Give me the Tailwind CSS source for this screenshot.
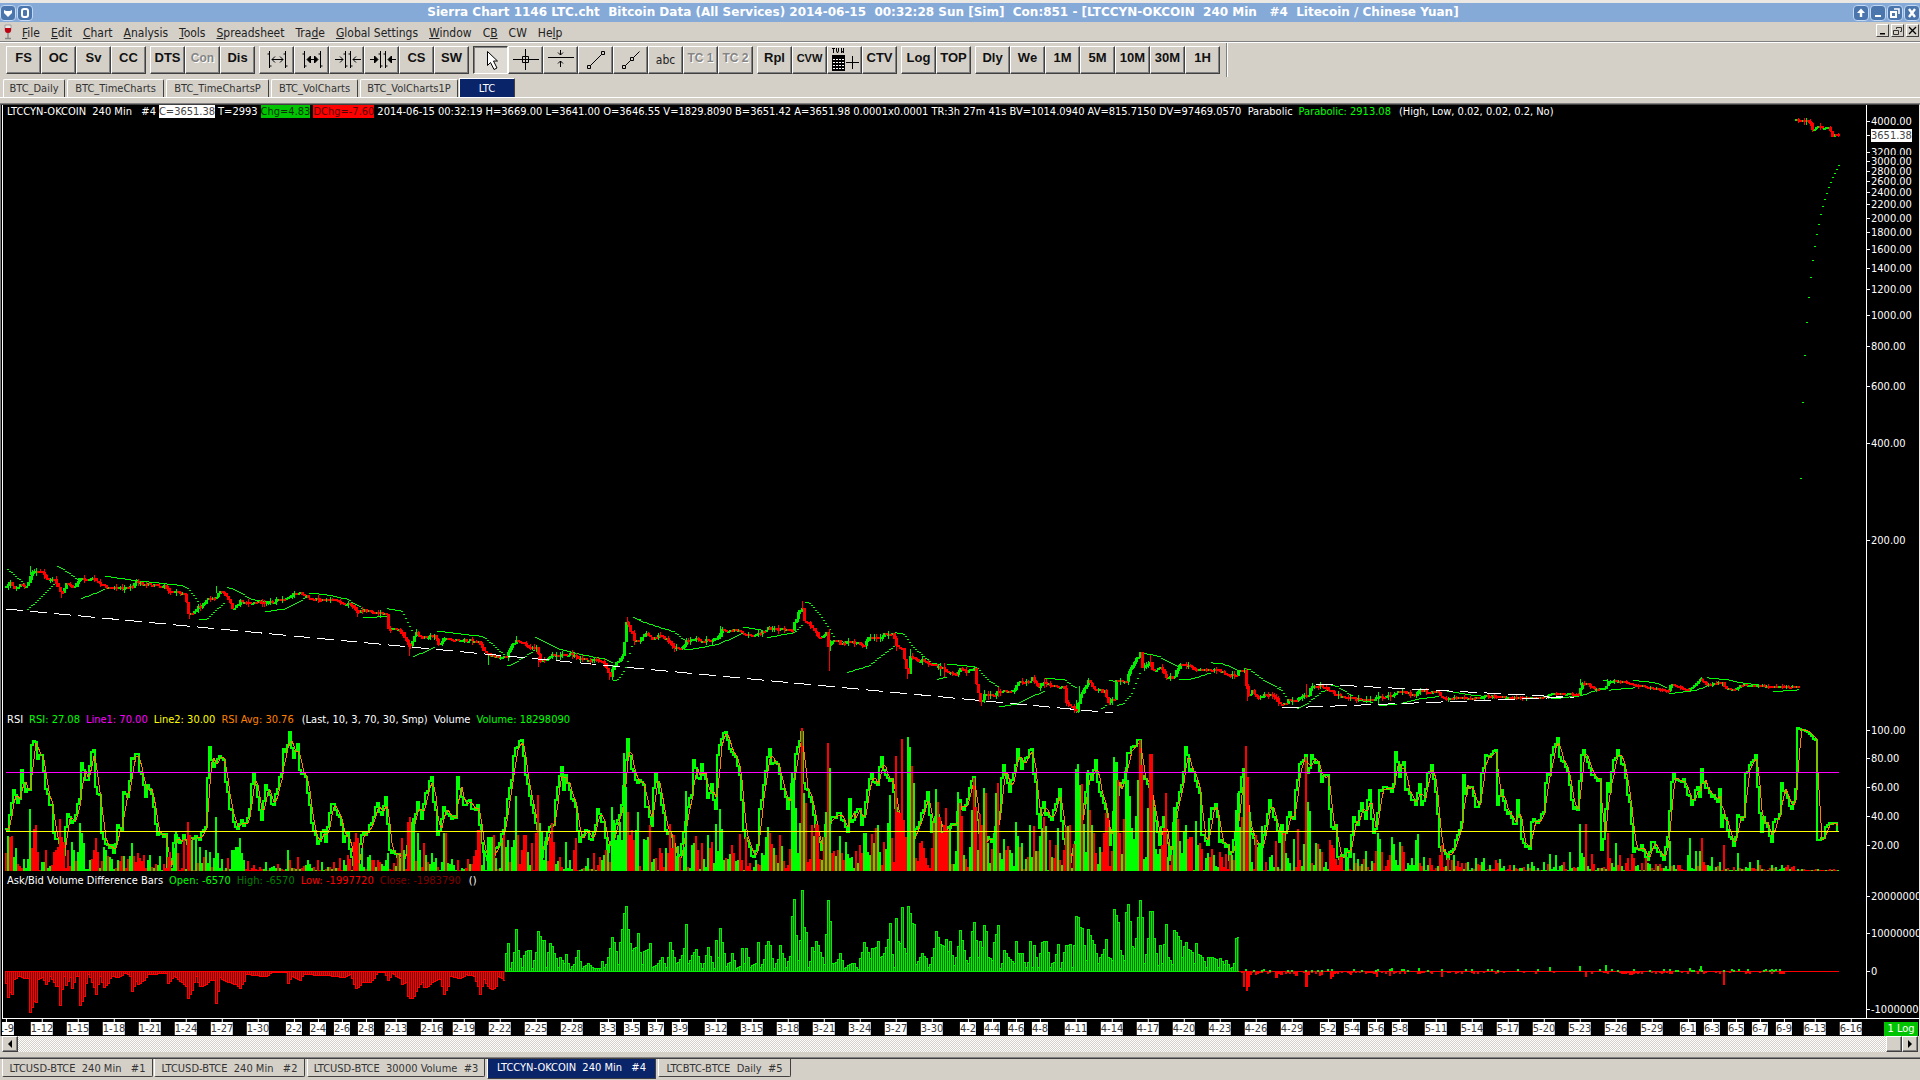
<!DOCTYPE html>
<html lang="en">
<head>
<meta charset="utf-8">
<title>Sierra Chart 1146 LTC.cht</title>
<script src="https://cdn.jsdelivr.net/npm/@tailwindcss/browser@4"></script>
</head>
<body class="flex min-h-screen flex-col overflow-hidden bg-[#d4d0c8] font-['DejaVu_Sans_Condensed','Noto_Sans',sans-serif] text-[11px] text-black">

<!-- Title bar -->
<header class="flex h-[22px] items-center border-t-3 border-[#ebe8e4] bg-[#86aad8]">
  <div class="flex shrink-0 gap-px">
    <button aria-label="Window menu" class="flex size-4 items-center justify-center rounded-sm border border-[#c3d8f2] bg-[#4b76ad]"><svg class="size-3" viewBox="0 0 12 12"><path d="M2 3l2 1h4l2-1v3L6 10 2 6z" fill="#fff"/></svg></button>
    <button aria-label="Pin" class="flex size-4 items-center justify-center rounded-sm border border-[#c3d8f2] bg-[#4b76ad]"><svg class="size-3" viewBox="0 0 12 12"><rect x="3" y="2" width="6" height="8" rx="2" fill="none" stroke="#fff" stroke-width="2"/></svg></button>
  </div>
  <h1 class="flex-1 text-center font-['DejaVu_Sans',sans-serif] text-[12px] leading-[19px] font-bold whitespace-pre text-white">Sierra Chart 1146 LTC.cht  Bitcoin Data (All Services) 2014-06-15  00:32:28 Sun [Sim]  Con:851 - [LTCCYN-OKCOIN  240 Min   #4  Litecoin / Chinese Yuan]</h1>
  <div class="flex shrink-0 gap-px">
    <button aria-label="Shade" class="flex size-4 items-center justify-center rounded-sm border border-[#c3d8f2] bg-[#4b76ad]"><svg class="size-3" viewBox="0 0 12 12"><path d="M6 1.500L10 6H7.200v4H4.800V6H2z" fill="#fff"/></svg></button>
    <button aria-label="Minimize" class="flex size-4 items-center justify-center rounded-sm border border-[#c3d8f2] bg-[#4b76ad]"><svg class="size-3" viewBox="0 0 12 12"><path d="M3 8h6v2H3z" fill="#fff"/></svg></button>
    <button aria-label="Restore" class="flex size-4 items-center justify-center rounded-sm border border-[#c3d8f2] bg-[#4b76ad]"><svg class="size-3" viewBox="0 0 12 12" fill="none" stroke="#fff" stroke-width="2"><path d="M2 5h5v5H2z"/><path d="M5 2h5v5" stroke-width="1.500"/></svg></button>
    <button aria-label="Close" class="flex size-4 items-center justify-center rounded-sm border border-[#c3d8f2] bg-[#4b76ad]"><svg class="size-3" viewBox="0 0 12 12"><path d="M3 2l6 8M9 2l-6 8" stroke="#fff" stroke-width="2.400"/></svg></button>
  </div>
</header>

<!-- Menu bar -->
<nav class="flex h-[21px] items-center border-b border-white pl-[3px] text-[12px] text-[#222] shadow-[inset_0_-1px_#808080]">
  <svg class="mr-[9px] h-4 w-2.5 shrink-0" viewBox="0 0 10 16"><path d="M2 1h6v5a3 3 0 0 1-6 0z" fill="#e8e8e8" stroke="#888" stroke-width=".7"/><path d="M2 4h6v2a3 3 0 0 1-6 0z" fill="#c00010"/><path d="M5 9v5M2 14.500h6" stroke="#888" stroke-width="1.300"/></svg>
  <div class="flex flex-1 gap-[11px] pt-px">
    <button><u>F</u>ile</button><button><u>E</u>dit</button><button><u>C</u>hart</button><button><u>A</u>nalysis</button><button><u>T</u>ools</button><button><u>S</u>preadsheet</button><button>Tra<u>d</u>e</button><button><u>G</u>lobal Settings</button><button><u>W</u>indow</button><button>C<u>B</u></button><button>CW</button><button>He<u>l</u>p</button>
  </div>
  <div class="flex gap-0.5 pr-px pb-1">
    <button aria-label="Minimize chart" class="flex size-[13px] items-center justify-center border border-t-white border-l-white border-r-[#404040] border-b-[#404040]"><svg class="size-[11px]" viewBox="0 0 11 11"><path d="M3 8h5v1.500H3z"/></svg></button>
    <button aria-label="Restore chart" class="flex size-[13px] items-center justify-center border border-t-white border-l-white border-r-[#404040] border-b-[#404040]"><svg class="size-[11px]" viewBox="0 0 11 11" fill="none" stroke="#333"><path d="M1.500 5.500h5v4h-5zM4.500 4V2.500h5v4H8"/></svg></button>
    <button aria-label="Close chart" class="flex size-[13px] items-center justify-center border border-t-white border-l-white border-r-[#404040] border-b-[#404040]"><svg class="size-[11px]" viewBox="0 0 11 11"><path d="M2 2l7 7M9 2l-7 7" stroke="#000" stroke-width="1.300"/></svg></button>
  </div>
</nav>

<!-- Toolbar, filled from the button list -->
<div class="flex h-[35px] items-start">
  <div id="toolbar" class="flex gap-1 pt-[3px] pl-1.5"></div>
  <div class="ml-1.5 h-[34px] w-0.5 border-r border-l border-l-[#808080] border-r-white"></div>
</div>

<!-- Chartbook tabs -->
<div class="flex h-[20px] items-end border-b border-white pl-[3px] leading-none text-[#333]">
  <button class="mr-0.5 h-[18px] w-[62px] rounded-t-xs border border-b-0 border-t-white border-l-white border-r-[#404040]">BTC_Daily</button>
  <button class="mr-0.5 h-[18px] w-[97px] rounded-t-xs border border-b-0 border-t-white border-l-white border-r-[#404040]">BTC_TimeCharts</button>
  <button class="mr-0.5 h-[18px] w-[103px] rounded-t-xs border border-b-0 border-t-white border-l-white border-r-[#404040]">BTC_TimeChartsP</button>
  <button class="mr-0.5 h-[18px] w-[87px] rounded-t-xs border border-b-0 border-t-white border-l-white border-r-[#404040]">BTC_VolCharts</button>
  <button class="mr-px h-[18px] w-[98px] rounded-t-xs border border-b-0 border-t-white border-l-white border-r-[#404040]">BTC_VolCharts1P</button>
  <button class="h-[19px] w-[56px] border border-b-0 border-t-white border-l-white border-r-[#404040] bg-[#0a246a] text-white">LTC</button>
</div>

<!-- Chart window -->
<main class="mt-[5px] flex grow flex-col border-t border-t-[#808080] text-[11px] leading-[13px]">
 <div class="flex grow flex-col border-x border-t border-t-[#404040] border-l-[#808080] border-r-[#ebe8e4] bg-black pl-px">
  <div class="flex grow border-b border-white">
    <div class="flex min-w-0 grow flex-col border-l border-white whitespace-pre text-white">
      <div class="flex h-[13px] pl-1">
        <span>LTCCYN-OKCOIN  240 Min   #4</span>
        <span class="mx-[3px] bg-white text-[#444]">C=3651.38</span>
        <span>T=2993</span>
        <span class="mx-[3px] bg-[#00c400] text-[#063006]">Chg=4.83</span>
        <span class="mr-[3px] bg-[#ff0000] text-[#500]">DChg=-7.60</span>
        <span>2014-06-15 00:32:19 H=3669.00 L=3641.00 O=3646.55 V=1829.8090 B=3651.42 A=3651.98 0.0001x0.0001 TR:3h 27m 41s BV=1014.0940 AV=815.7150 DV=97469.0570  Parabolic</span>
        <span class="ml-1.5 text-[#00ff00]">Parabolic: 2913.08</span>
        <span class="ml-2">(High, Low, 0.02, 0.02, 0.2, No)</span>
      </div>
      <svg id="price" class="h-[595px] w-full" viewBox="4 118 1863 595" preserveAspectRatio="none" shape-rendering="crispEdges"></svg>
      <div class="flex h-[14px] gap-1.5 pl-1">
        <span>RSI</span><span class="text-[#00ff00]">RSI: 27.08</span><span class="text-[#ff00ff]">Line1: 70.00</span><span class="text-[#ffff00]">Line2: 30.00</span><span class="text-[#ff8000]">RSI Avg: 30.76</span><span class="ml-0.5">(Last, 10, 3, 70, 30, Smp)</span><span>Volume</span><span class="text-[#00ff00]">Volume: 18298090</span>
      </div>
      <svg id="rsi" class="h-[147px] w-full" viewBox="4 727 1863 147" preserveAspectRatio="none" shape-rendering="crispEdges"></svg>
      <div class="flex h-[13px] gap-1.5 pl-1">
        <span>Ask/Bid Volume Difference Bars</span><span class="text-[#00ff00]">Open: -6570</span><span class="text-[#008000]">High: -6570</span><span class="text-[#ff0000]">Low: -1997720</span><span class="text-[#800000]">Close: -1983790</span><span class="ml-0.5">()</span>
      </div>
      <svg id="diff" class="h-[131px] w-full" viewBox="4 887 1863 131" preserveAspectRatio="none" shape-rendering="crispEdges"></svg>
    </div>
    <div id="scale" class="relative w-[53px] shrink-0 overflow-hidden border-l border-white text-white"></div>
  </div>
  <div class="relative h-[17px] overflow-hidden">
    <div id="dates"></div>
    <span class="absolute top-[3px] right-px h-[14px] w-[34px] bg-[#00c400] text-center text-white">1 Log</span>
  </div>
 </div>
 <!-- Horizontal scroll bar -->
 <div class="mr-0.5 ml-0.5 flex h-4 justify-between bg-[#eae8e4] bg-[repeating-conic-gradient(#d4d0c8_0_25%,#ffffff_0_50%)] bg-size-[2px_2px]">
   <button aria-label="Scroll left" class="flex w-4 items-center justify-center border border-t-white border-l-white border-r-[#404040] border-b-[#404040] bg-[#d4d0c8] shadow-[inset_-1px_-1px_#808080]"><svg class="h-2 w-1.5" viewBox="0 0 6 8"><path d="M5 0v8L1 4z"/></svg></button>
   <div class="flex">
     <div class="w-4 border border-t-white border-l-white border-r-[#404040] border-b-[#404040] bg-[#d4d0c8] shadow-[inset_-1px_-1px_#808080]"></div>
     <button aria-label="Scroll right" class="flex w-4 items-center justify-center border border-t-white border-l-white border-r-[#404040] border-b-[#404040] bg-[#d4d0c8] shadow-[inset_-1px_-1px_#808080]"><svg class="h-2 w-1.5" viewBox="0 0 6 8"><path d="M1 0v8l4-4z"/></svg></button>
   </div>
 </div>
</main>

<!-- Chart tabs -->
<footer class="mt-[6px] flex h-[22px] items-start border-t border-[#404040] pl-0.5 whitespace-pre text-[#333] shadow-[0_-1px_#808080]">
  <button class="mr-px h-[18px] w-[151px] rounded-b-xs border border-t-0 border-l-white border-r-[#404040] border-b-[#404040] pt-0.5">LTCUSD-BTCE  240 Min   #1</button>
  <button class="mr-0.5 h-[18px] w-[151px] rounded-b-xs border border-t-0 border-l-white border-r-[#404040] border-b-[#404040] pt-0.5">LTCUSD-BTCE  240 Min   #2</button>
  <button class="mr-0.5 h-[18px] w-[178px] rounded-b-xs border border-t-0 border-l-white border-r-[#404040] border-b-[#404040] pt-0.5">LTCUSD-BTCE  30000 Volume  #3</button>
  <button class="mr-0.5 h-[20px] w-[169px] border border-t-0 border-l-white border-r-[#404040] border-b-[#404040] bg-[#0a246a] text-white">LTCCYN-OKCOIN  240 Min   #4</button>
  <button class="h-[18px] w-[133px] rounded-b-xs border border-t-0 border-l-white border-r-[#404040] border-b-[#404040] pt-0.5">LTCBTC-BTCE  Daily  #5</button>
</footer>

<script>
// ---- Toolbar ----
const bar = (x) => `M${x} 4v17M${x - 2} 7h2M${x} 19h2`;
const icons = {
  wide: `<path d="${bar(9.5)}${bar(25.5)}M12 12.500h11M15 9.500l-3 3 3 3M20 9.500l3 3-3 3"/>`,
  wideBold: `<path d="${bar(9.5)}${bar(25.5)}M13 12.500h9"/><path fill="#000" d="M15.500 9v7l-3.500-3.500zM19.500 9v7l3.500-3.500z"/>`,
  narrow: `<path d="${bar(15.5)}${bar(20.5)}M5 12.500h8M10 9.500l3 3-3 3M31 12.500h-8M26 9.500l-3 3 3 3"/>`,
  narrowBold: `<path d="${bar(15.5)}${bar(20.5)}M5 12.500h4M31 12.500h-4"/><path fill="#000" d="M9.500 9v7l3.500-3.500zM26.500 9v7l-3.500-3.500z"/>`,
  arrow: `<path fill="#fff" d="M13.500 4.500v14l3-3 3.500 7 3-1.500-3.500-7h4z"/>`,
  cross: `<path d="M4 12.500h26M16.500 2v21M13.500 9.500h6v6h-6z"/>`,
  level: `<path d="M4 10.500h26M16.500 3v5M14 5.500l2.500 2.500 2.500-2.500M16.500 20v-6M14 16.500l2.500-2.500 2.500 2.500"/>`,
  line: `<path d="M8.500 18.500h3v3h-3zM22.500 4.500h3v3h-3zM11.500 18.500l11-11"/>`,
  ray: `<path d="M8.500 18.500h3v3h-3zM16.500 10.500h3v3h-3zM11.500 18.500l5-5M19.500 10.500l6-6"/>`,
  calc: `<path d="M4 8h13v16H4z" fill="#000" stroke="none"/><path stroke="#fff" d="M5 12.500h11M5 15.500h11M5 18.500h11M5 21.500h11"/><path stroke="#000" d="M7.500 11v12M10.500 11v12M13.500 11v12M18 15.500h13M24.500 9v13M4 1.500h3M5.500 1v5M8.500 1v3l1 2 1-2V1M13.500 1v5l1-2 1 2V1"/>`
};
const groups = [
  ['FS', 'OC', 'Sv', 'CC'], ['DTS', '-Con', 'Dis'],
  ['*wide', '*wideBold', '*narrow', '*narrowBold', 'CS', 'SW'],
  ['*arrow', '*cross', '*level', '*line', '*ray', 'abc', '-TC 1', '-TC 2'],
  ['Rpl', 'CVW', '*calc', 'CTV'], ['Log', 'TOP'], ['Dly', 'We', '1M', '5M', '10M', '30M', '1H']
];
const raised = 'flex h-[28px] w-[35px] items-center justify-center border border-t-white border-l-white border-r-[#404040] border-b-[#404040] shadow-[inset_-1px_-1px_#808080]';
const sunken = 'flex h-[28px] w-[35px] items-center justify-center border border-t-[#404040] border-l-[#404040] border-r-white border-b-white bg-[#dedbd4] shadow-[inset_1px_1px_#808080]';
const bold = "pb-1 font-['Liberation_Sans',sans-serif] text-[13px] font-bold text-[#111]";
const face = { abc: 'pb-px text-[12px] text-[#222]', CVW: "pb-1 font-['Liberation_Sans',sans-serif] text-[11px] font-bold text-[#111]" };
document.getElementById('toolbar').innerHTML = groups.map(g => '<div class="flex">' + g.map(b => {
  if (b[0] === '*') return `<button aria-label="${b.slice(1)}" class="${b === '*arrow' ? sunken : raised}"><svg class="h-[26px] w-[33px]" viewBox="0 0 33 26" fill="none" stroke="#000">${icons[b.slice(1)]}</svg></button>`;
  if (b[0] === '-') return `<button disabled class="${raised}"><span class="pb-1 font-['Liberation_Sans',sans-serif] text-[12px] font-bold text-[#858585] [text-shadow:1px_1px_#fff]">${b.slice(1)}</span></button>`;
  return `<button class="${raised}"><span class="${face[b] || bold}">${b}</span></button>`;
}).join('') + '</div>').join('');

// ---- Series helpers: each block has its own origin and units per pixel ----
const A = [0, 2.45, 540, 3], B = [640, 2.45, 580, 3], C = [1240, 2.306, 640, 3];
const D = [0, 2.24, 860, 3], E = [700, 2.45, 860, 3], F = [1760, 3, 100, 3];
const read = (m, s) => s.trim().split(/\s+/).map(t => { const [x, y, c] = t.split(','); return [m[0] + x / m[1], m[2] + y / m[3], c]; });
let seed = 7;
const rnd = () => (seed = (seed * 16807) % 2147483647) / 2147483647;
const sample = (pts, snap) => { // value at every 2px bar; snap keeps the given extremes
  const out = []; let k = 0;
  for (let x = Math.ceil(pts[0][0] / 2) * 2; x <= pts[pts.length - 1][0]; x += 2) {
    while (k < pts.length - 2 && pts[k + 1][0] < x) k++;
    const [x0, y0] = pts[k], [x1, y1] = pts[k + 1];
    out.push([x, y0 + (y1 - y0) * Math.max(0, Math.min(1, (x - x0) / (x1 - x0 || 1)))]);
  }
  if (snap) pts.forEach(([x, y]) => { const i = Math.round((x - out[0][0]) / 2); if (out[i]) out[i][1] = y; });
  return out;
};
const R = Math.round;
const box = (x, y, w, h) => `M${R(x)} ${R(y)}h${w}v${R(h)}h-${w}z`;
const fill = (c, d) => `<path fill="${c}" d="${d}"/>`;

// ---- Price ----
const price = [
  [...read(A, `14,143 25,128 33,143 50,138 66,135 74,105 82,95 100,92 113,118 133,120 150,160 163,132 180,143 197,118 228,116 245,135 265,147 290,142 322,140 333,124 350,132 400,140 413,155 430,152 453,168 463,225 480,208 495,195 510,175 525,178 538,152 550,160 570,205 590,183 615,188 645,187 690,180 715,165 735,160 755,175 780,180 815,180 840,188 860,197 875,218 890,210 905,218 948,222 952,265 975,270 985,280 1003,320 1018,280 1035,293 1065,288 1072,315 1090,298 1130,302 1170,302 1185,330 1200,350 1240,352 1250,325 1265,302 1285,308 1295,325 1312,322 1325,362 1340,355 1355,345 1405,345 1420,358 1475,362 1493,408 1505,375 1525,345 1535,245 1545,272 1553,300`),
   ...read(B, `0,178 15,163 30,178 45,168 65,178 80,203 103,207 113,185 133,176 145,183 185,180 200,152 245,153 262,167 285,165 300,158 315,146 330,148 370,150 380,120 390,90 397,88 400,120 415,135 425,152 440,177 450,165 460,155 463,195 470,182 485,182 490,193 510,187 540,190 547,202 560,175 590,172 600,165 618,160 628,195 640,205 655,285 662,230 680,245 690,238 710,252 730,262 745,265 755,280 775,280 785,265 800,275 817,265 822,310 835,370 845,345 865,347 880,335 900,335 918,328 925,305 950,308 960,295 975,322 990,305 1005,318 1038,322 1045,370 1070,392 1078,345 1098,305 1112,325 1135,335 1148,365 1162,360 1165,305 1190,308 1195,280 1210,250 1224,220 1232,262 1248,245 1255,270 1275,265 1290,290 1307,293 1312,272 1325,255 1345,258 1360,270 1415,272 1435,285 1460,285 1465,270 1480,268 1485,320 1492,350 1500,335 1515,352 1530,345 1555,350`),
   ...read(C, `92,193 100,193 112,180 125,183 140,170 155,168 160,142 180,138 200,145 215,160 240,172 275,178 310,180 318,170 345,170 355,160 378,153 395,168 415,152 455,160 470,176 505,172 530,176 570,168 610,172 680,174 705,170 720,160 780,162 787,130 800,132 815,148 840,145 850,125 880,123 900,132 950,145 985,153 995,135 1020,145 1035,150 1050,132 1062,118 1075,135 1095,130 1110,130 1120,147 1145,147 1155,135 1200,138 1290,142`)],
  read(F, `107,60 125,62 145,65 157,90 175,80 185,86 200,84 210,92 217,108 225,105 238,102`)
];
let up = '', down = '', dots = '';
price.forEach(p => {
  let prev = p[0][1];
  sample(p, true).forEach(([x, y]) => {
    const calm = x > 1440 && x < 1790 ? 1 : 2.600;
    const close = y + (rnd() - .5) * calm, top = Math.min(prev, close), h = Math.max(1, Math.abs(prev - close));
    const wick = rnd() < .4 ? 1 + rnd() * calm : 0;
    const d = box(x, top - .5, 3, Math.max(1, R(h + .5))) + box(x + 1, top - wick, 1, R(h + 2 * wick) || 1);
    if (close <= prev) up += d; else down += d;
    prev = close;
  });
});
[[A, `74,78,105,g 150,150,173,r 530,138,160,g 463,200,236,r 875,200,230,r 1001,300,347,r 1018,268,285,g 1196,345,374,g 1265,288,302,g 1319,350,381,r 1491,400,420,r 1535,231,250,r`],
  [B, `197,138,152,g 397,63,88,r 462,148,275,r 466,180,212,g 315,138,146,g 653,250,297,r 661,207,240,g 628,175,214,r 843,330,370,g 878,320,350,r 835,350,377,r 1075,318,395,g 1068,360,398,g 1222,215,230,g 1250,225,262,r 1487,320,363,r 1148,350,375,r 990,295,325,r 735,250,288,g 745,248,290,r`],
  [C, `153,132,165,r 319,155,193,g 785,118,135,g 1063,112,125,g 847,118,130,g 990,135,155,g 16,130,185,r`]
].forEach(([m, s]) => s.split(' ').forEach(t => {
  const [x, a, b, c] = t.split(',');
  const d = box(m[0] + x / m[1] + 1, m[2] + a / 3, 1, (b - a) / 3);
  if (c === 'g') up += d; else down += d;
}));
// Parabolic stop-and-reverse dots
[[A, `15,82 60,130|66,208 80,195 133,132|138,78 150,82 195,120|197,176 255,148|257,107 330,120 445,135 460,142 490,190|490,238 505,238 552,185|555,140 570,145 620,178 660,184|648,214 700,205 750,172|755,157 800,163 850,176 890,205|888,232 948,228|950,205 985,212 1010,270|1014,348 1068,320|1073,272 1175,287 1190,293 1235,343|1242,376 1255,373 1310,330|1313,290 1370,325 1425,343 1480,355 1500,365|1500,420 1515,418 1535,380 1550,310|1553,232 1568,238`],
 [B, `0,121 85,155 110,180|112,208 150,202 195,190 250,160|250,139 300,149|310,172 380,156 398,135|402,64 415,68 440,100 465,145 480,180 500,185|505,277 560,257 625,196|627,157 648,161 670,200 715,248 735,252|727,298 750,290|750,250 825,260 850,295 878,320|878,379 920,372 990,332|990,292 1040,298 1072,325|1128,388 1145,373|1147,298 1165,304|1167,376 1185,370 1205,340 1228,270|1230,217 1270,227 1320,258|1323,298 1350,296 1400,277|1400,247 1430,251 1465,268|1482,264 1492,266 1530,300 1568,326`],
 [C, `92,142 110,175|130,206 150,195 190,153 205,148|208,133 225,138 275,180 305,185|322,195 360,192|370,190 410,176 460,168|470,150 530,163 600,172 700,172|715,176 790,165 820,150|835,118 848,120|850,149 910,142|908,121 935,122 965,130 985,142|988,160 1050,150 1075,138|1075,112 1120,117 1160,128 1220,137|1227,154 1288,148`]
].forEach(([m, s]) => s.split('|').forEach(r => sample(read(m, r)).forEach(([x, y]) => dots += box(x, y, 2, 1))));
read(F, `236,196 230,208 224,220 218,232 212,247 206,262 200,280 194,298 188,319 182,343 176,373 170,403 164,439 158,481 152,532 146,592 140,667 134,766 128,907 122,1135`).forEach(([x, y]) => dots += box(x, y, 2, 1));
document.getElementById('price').innerHTML = fill('#00ff00', dots) + fill('#00ee00', up) + fill('#ff0000', down) +
  `<path d="M7 609L1114 713M1317 684L1564 697M1283 708L1575 697" stroke="#fff" stroke-dasharray="17 7" fill="none"/>`;

// ---- RSI and volume ----
const rsi = sample([
  ...read(A, `14,868 20,865 35,745 43,790 48,770 53,695 62,750 72,750 78,610 88,605 95,650 103,645 115,750 125,800 133,880 145,910 155,950 165,815 175,848 185,830 195,770 203,672 210,715 218,725 223,630 230,635 235,740 245,770 252,880 262,915 272,920 280,940 290,860 298,868 305,760 315,765 325,655 337,643 345,690 358,765 362,740 372,755 385,880 405,885 412,990 420,960 430,880 440,910 450,890 460,905 475,890 490,895 505,855 513,620 525,685 535,650 548,655 555,730 565,800 575,845 583,870 592,835 600,862 612,810 620,695 632,770 643,845 650,730 660,765 670,800 680,740 690,700 695,620 703,640 710,570 718,655 728,615 735,690 750,710 765,850 780,912 792,870 800,900 812,785 825,810 835,835 845,900 852,880 865,975 875,985 885,880 895,885 910,850 925,790 937,830 945,765 955,930 975,945 995,950 1005,880 1025,790 1033,830 1045,760 1058,710 1065,780 1075,885 1090,800 1100,825 1115,835 1120,705 1130,770 1140,800 1150,775 1155,810 1170,800 1185,940 1200,960 1220,920 1235,870 1245,780 1253,715 1262,625 1280,600 1290,710 1305,800 1318,870 1330,945 1345,870 1358,850 1365,740 1375,685 1380,750 1385,700 1395,750 1410,800 1420,910 1430,880 1440,872 1450,905 1467,810 1478,850 1490,930 1500,905 1512,840 1525,800 1537,600 1548,680 1560,720`),
  ...read(B, `0,605 10,610 18,740 22,680 28,742 37,572 50,640 65,750 80,770 92,865 100,820 112,720 125,640 133,545 145,600 153,553 160,600 167,655 175,615 184,680 190,530 200,470 213,455 220,510 232,520 245,580 255,750 268,800 278,835 290,790 295,690 305,610 317,500 322,555 335,540 350,620 365,680 375,590 385,500 397,460 403,610 420,660 430,740 445,810 455,740 470,715 490,700 508,750 515,660 520,725 537,680 545,740 555,660 567,572 572,610 583,610 592,530 602,590 618,600 630,700 640,770 660,800 680,740 695,690 704,640 715,750 728,700 740,760 755,740 775,730 785,660 795,695 817,585 825,700 840,800 850,775 865,780 880,700 890,548 900,610 908,630 915,580 928,512 935,560 950,525 960,507 968,610 978,738 988,665 995,700 1010,715 1028,632 1037,770 1055,840 1070,780 1085,700 1100,575 1107,600 1115,545 1125,630 1140,680 1152,795 1160,700 1165,550 1172,640 1190,580 1197,520 1210,498 1224,480 1232,590 1247,605 1258,690 1275,790 1282,710 1300,840 1312,685 1325,640 1340,505 1348,570 1358,575 1370,640 1378,760 1390,790 1400,685 1413,675 1422,780 1440,800 1445,840 1460,760 1470,640 1478,562 1490,720 1500,765 1520,810 1530,770 1542,665 1555,705`),
  ...read(C, `92,600 95,560 103,600 113,515 125,540 130,450 138,375 150,350 157,400 167,350 180,370 190,420 202,400 210,560 220,560 228,650 240,650 245,620 252,650 262,535 270,550 283,490 290,540 298,445 307,580 315,560 325,450 340,440 350,455 358,410 362,340 368,405 377,365 385,445 405,495 413,435 420,495 430,450 435,400 442,380 452,450 462,620 480,650 495,620 510,550 515,405 520,455 535,435 543,500 552,490 560,400 566,350 580,345 590,325 595,500 603,445 612,510 622,520 635,555 643,480 650,600 668,628 672,540 690,545 700,510 708,400 715,400 722,320 732,297 740,350 755,390 768,500 780,510 787,350 795,330 803,370 815,410 828,420 835,630 840,590 848,430 853,450 862,360 873,335 885,380 897,460 910,630 928,620 942,665 950,600 962,630 978,655 988,590 995,430 1003,402 1010,425 1022,420 1035,460 1042,495 1055,440 1060,465 1064,390 1070,430 1085,460 1100,480 1105,450 1110,560 1118,520 1125,570 1140,618 1150,530 1160,535 1167,400 1175,380 1188,348 1195,440 1203,580 1210,530 1225,600 1230,550 1243,525 1250,430 1262,475 1275,510 1282,440 1286,265 1310,275 1327,300 1331,600 1345,595 1352,560 1360,550 1373,550 1382,582`)
], true).map(([x, y], i) => [x, y + (i % 3 === 1 ? 2 : i % 3 === 2 ? -1.500 : 0) * (x < 1800 ? 1 : .2)]);
let line = '', avg = '';
rsi.forEach(([x, y], i) => {
  const v = R(y), a = R((y + rsi[Math.max(0, i - 1)][1] + rsi[Math.max(0, i - 2)][1]) / 3);
  line += i ? `H${x}V${v}` : `M${x} ${v}`;
  avg += i ? `L${x + 1} ${a}` : `M${x + 1} ${a}`;
});
const vol = {};
for (let x = 6; x < 1840; x += 2) {
  const m = x > 1795 ? 1 : x > 1640 ? 6 : x > 1480 ? 5 : x > 1280 ? 11 : x > 640 ? 18 : x > 250 && x < 340 ? 4 : 13;
  vol[x] = [1 + rnd() * rnd() * m * 1.800, rnd() < .5 ? 'g' : 'r'];
}
[[A, `15,938,r 19,888,g 24,890,r 29,888,r 35,950,g 60,958,g 67,958,g 73,808,g 78,925,r 83,868,r 88,855,r 94,935,r 112,930,r 130,935,r 135,930,r 140,920,r 147,838,r 152,890,r 158,905,r 165,930,r 177,905,g 183,930,g 190,935,g 197,848,g 201,880,g 206,910,g 222,960,g 230,930,r 235,893,r 240,935,r 255,920,g 260,930,g 270,950,g 290,960,g 323,910,g 330,948,r 338,938,r 345,955,r 353,945,r 380,972,r 410,950,r 418,935,r 425,925,g 430,875,g 435,940,r 453,900,r 460,845,r 465,885,r 472,900,g 480,890,g 490,920,g 500,950,r 505,930,g 515,935,g 522,955,g 530,830,g 536,940,g 560,955,r 570,930,g 574,930,g 578,920,g 583,920,g 588,895,g 592,940,g 610,962,r 650,965,g 705,930,g 712,960,r 730,950,r 755,960,g 780,960,r 790,965,g 820,965,r 835,955,r 845,960,g 853,945,r 865,905,r 870,880,r 877,895,r 885,925,g 900,950,g 910,960,r 945,960,g 950,940,g 975,945,r 985,895,r 990,930,g 998,845,r 1003,830,r 1010,845,g 1015,840,g 1022,880,g 1030,930,g 1038,910,r 1045,945,g 1060,940,g 1070,955,g 1087,880,g 1092,880,r 1165,930,r 1172,870,r 1178,870,r 1185,930,g 1195,890,g 1200,890,g 1205,890,g 1212,885,r 1230,900,g 1235,885,r 1240,920,g 1245,900,g 1252,920,g 1257,900,g 1264,768,g 1270,885,r 1280,930,r 1285,885,r 1290,885,r 1305,910,r 1313,880,r 1318,765,r 1325,850,g 1330,875,g 1340,890,g 1347,895,r 1352,850,r 1358,905,r 1385,905,g 1408,930,r 1413,895,r 1440,955,g 1470,950,r 1485,930,r 1492,915,g 1498,800,g 1503,840,g 1508,900,g 1513,885,g 1519,845,g 1524,900,g 1530,640,g 1533,740,g 1538,815,r 1543,885,r 1548,870,r 1553,900,r 1558,870,g 1563,815,g`],
 [B, `10,778,g 15,780,g 20,770,g 24,735,r 40,835,r 50,805,r 53,820,r 70,820,r 73,732,r 78,805,r 83,765,r 98,830,r 107,800,g 112,632,g 127,795,g 133,790,g 138,768,r 143,810,r 157,838,g 166,765,g 171,805,r 186,732,g 191,812,g 196,688,g 200,748,g 206,840,g 220,822,g 225,795,r 247,762,r 260,770,r 285,840,g 305,825,g 309,770,g 313,740,g 318,760,r 335,825,r 343,765,r 348,798,g 367,808,r 374,580,g 379,600,g 383,685,g 388,820,g 392,730,g 397,444,r 402,640,g 407,670,r 422,735,r 427,768,g 433,732,r 438,735,r 445,840,g 450,770,r 455,695,g 461,488,r 466,565,g 471,820,r 480,828,g 485,810,r 490,768,g 495,820,r 520,830,g 539,795,r 544,820,r 549,760,g 554,760,g 559,815,g 564,825,g 569,762,r 574,790,g 579,745,r 584,735,g 588,815,g 598,785,r 603,808,g 608,728,g 613,645,g 618,775,r 628,528,r 633,695,r 638,700,r 642,478,r 647,720,r 652,770,r 657,470,g 662,500,g 667,558,r 672,610,g 677,835,r 687,790,r 692,782,r 697,805,r 702,835,r 716,805,r 720,730,r 726,628,g 731,665,r 736,712,r 740,760,r 745,735,r 750,685,r 755,750,r 760,735,g 775,812,g 780,635,g 784,670,r 789,708,r 794,825,g 809,800,g 814,690,g 818,595,r 823,680,r 828,810,g 833,702,r 838,735,r 843,625,g 848,640,r 853,790,g 863,808,r 868,760,g 873,640,g 878,610,r 892,778,g 897,810,r 902,798,r 907,810,g 912,820,g 921,725,g 926,768,g 931,800,r 936,790,g 950,830,r 955,735,g 965,738,r 980,768,g 985,745,g 990,712,r 995,738,g 1010,830,g 1020,795,r 1025,745,g 1038,810,r 1043,740,r 1048,738,g 1053,735,r 1063,792,r 1068,567,g 1073,552,g 1077,615,g 1083,612,r 1087,732,g 1092,815,g 1097,570,g 1102,690,r 1107,735,g 1112,758,r 1117,820,r 1127,800,g 1132,815,r 1136,758,r 1141,700,r 1146,715,r 1157,812,r 1162,530,g 1167,552,g 1171,600,r 1176,758,r 1181,822,g 1186,716,r 1191,560,g 1195,600,g 1200,648,g 1205,745,g 1210,778,g 1215,708,g 1220,600,g 1225,480,r 1229,555,r 1235,838,g 1240,830,g 1245,685,g 1250,522,r 1254,522,r 1259,680,g 1279,795,r 1284,745,r 1288,640,r 1303,825,r 1308,682,g 1313,682,g 1318,718,r 1323,783,g 1332,752,g 1337,735,g 1342,778,r 1347,770,r 1352,770,r 1362,722,g 1367,795,g 1372,790,r 1377,808,r 1391,820,g 1396,830,r 1401,808,r 1406,825,g 1421,815,r 1426,830,r 1435,822,r 1455,840,r 1460,690,g 1465,640,g 1470,740,g 1475,712,r 1480,580,g 1484,498,r 1489,590,r 1494,697,g 1508,765,r 1513,800,g 1518,790,g 1523,738,g 1548,825,g 1558,782,r`],
 [C, `97,597,g 103,580,r 108,640,g 123,597,g 133,567,r 140,660,r 147,612,g 152,352,r 156,485,g 161,513,g 176,608,g 181,612,r 186,628,g 190,635,r 207,600,r 212,615,r 217,625,r 230,650,r 245,635,g 262,640,g 288,657,r 313,633,r 318,580,g 323,597,g 328,635,r 345,645,r 350,592,g 355,612,g 369,607,g 374,617,r 380,635,r 395,655,g 405,600,g 410,583,g 425,652,g 437,655,r 460,645,r 467,615,r 478,655,r 493,645,g 513,670,r 543,655,g 562,653,g 590,660,r 600,657,g 703,665,g 715,642,g 728,645,g 762,637,g 783,552,g 788,640,g 793,652,g 798,552,r 812,643,r 848,580,r 853,653,r 867,610,g 878,645,r 897,655,r 902,642,r 907,655,r 935,655,r 990,603,g 1032,645,g 1037,595,g 1050,632,g 1060,632,g 1065,595,r 1072,665,r 1090,650,g 1117,615,r 1148,640,g 1175,667,g 1200,675,r 1228,675,g 1248,675,g`]
].forEach(([m, s]) => read(m, s).forEach(([x, y, c]) => vol[R(x / 2) * 2] = [871 - y, c]));
let vg = '', vr = '';
for (const x in vol) { const [h, c] = vol[x], t = Math.max(1, R(h)), d = box(+x, 871 - t, 2, t); if (c === 'g') vg += d; else vr += d; }
document.getElementById('rsi').innerHTML =
  `<path d="${line}" fill="none" stroke="#00ff00" stroke-width="2"/><path d="${avg}" fill="none" stroke="#ff8000"/>` +
  fill('#00ff00', vg) + fill('#ff0000', vr) + fill('#ff00ff', box(7, 772, 1833, 1)) + fill('#ffff00', box(7, 831, 1833, 1));

// ---- Ask/bid volume difference ----
const base = 971;
const neg = sample([...read(D, `12,373 18,415 23,400 28,405 33,360 40,350 60,358 64,358 69,460 75,425 82,430 87,360 95,355 104,376 113,352 126,382 131,382 135,439 142,350 149,379 155,355 162,388 170,350 176,350 181,439 186,412 192,372 198,345 207,368 216,406 222,352 234,385 240,372 250,350 265,355 280,342 292,350 297,397 303,365 310,376 322,362 332,345 370,342 377,373 390,350 405,366 417,382 422,418 430,392 438,350 448,382 460,376 471,362 480,362 485,432 492,355 510,368 530,376 539,388 545,365 552,345 596,352 610,338 640,340 646,373 652,352 672,362 680,345 720,348 750,350 770,355 785,345 797,388 803,385 812,370 826,370 835,362 845,340 860,338 870,362 880,342 895,358 901,376 908,370 914,412 921,418 928,410 935,385 945,370 952,385 958,382 970,365 985,360 996,406 1002,382 1008,350 1028,358 1045,346 1060,350 1071,380 1076,406 1083,360 1093,382 1103,390 1110,382 1115,350 1130,363`)], true);
const pos = sample([...read(D, `1133,280 1139,250 1144,325 1152,275 1157,208 1162,270 1168,322 1176,272 1186,270 1192,325 1200,275 1206,213 1212,240 1218,240 1223,322 1227,275 1234,250 1243,280 1250,320 1256,290 1262,310 1269,283 1275,328 1285,312 1295,270 1302,325 1316,310 1330,325 1342,325 1349,303 1355,322 1363,290 1371,232 1377,247 1384,312 1390,247 1397,160 1403,138 1409,250 1415,270 1424,262 1430,220 1436,312 1443,273 1450,268 1457,250 1462,322 1475,308 1481,292 1492,322 1502,247 1508,290 1516,310 1525,298 1532,265 1538,193 1543,310 1550,285 1560,268`),
  ...read(E, `3,325 10,308 20,260 26,288 33,325 40,240 45,290 50,205 56,245 62,318 72,305 79,278 88,325 97,318 103,265 108,310 114,265 122,320 135,310 143,247 149,320 157,298 162,256 167,244 172,256 180,325 190,298 197,256 203,278 210,320 220,288 225,169 231,118 237,226 241,300 246,240 251,91 257,200 262,217 267,322 275,262 280,272 285,244 290,256 297,292 302,312 308,223 314,121 320,184 325,310 335,305 344,278 352,325 370,310 378,308 385,328 393,295 403,247 409,260 415,295 422,265 430,262 437,244 443,292 452,278 461,238 466,190 472,283 476,322 482,175 487,244 491,250 496,142 502,265 506,280 511,139 516,160 521,190 526,193 531,312 538,290 545,280 552,295 560,322 570,292 579,214 585,232 590,253 597,258 604,238 609,274 614,244 620,316 628,292 638,211 644,241 650,300 656,310 662,290 667,214 672,187 677,241 682,290 687,244 692,262 697,196 702,214 708,290 714,300 720,247 726,223 731,196 737,325 746,271 755,290 767,308 775,244 781,280 787,280 797,320 803,305 809,244 815,320 820,256 826,320 834,280 840,247 846,241 850,244 856,320 866,305 872,283 878,253 884,325 895,256 907,253 912,320 922,169 927,172 932,202 938,205 943,256 947,300 951,208 957,226 963,253 969,280 975,310 982,290 990,268 996,238 1002,290 1008,300 1015,148 1021,166 1026,187 1031,271 1037,300 1043,157 1049,133 1055,184 1060,259 1066,270 1070,235 1075,172 1079,121 1085,172 1090,310 1097,235 1103,154 1108,154 1114,235 1120,316 1128,256 1133,310 1138,253 1143,193 1148,290 1155,312 1162,211 1168,217 1174,241 1180,290 1186,259 1191,247 1197,268 1205,275 1212,310 1216,250 1222,283 1232,292 1240,320 1246,292 1256,290 1262,298 1268,320 1275,295 1283,312 1290,300 1297,325 1303,320 1308,308 1314,235 1320,232`)], true);
const tail = [...read(E, `1332,382 1339,394 1344,382 1350,346 1363,346 1370,340 1378,340 1412,355 1427,346 1462,349 1486,380 1493,346 1518,349 1523,346`),
  ...read(C, `85,1015 88,1003 95,1005 130,1008 153,1040 160,1003 190,1006 210,1018 214,1010 218,1003 255,1006 290,1003 315,1012 347,1008 380,1003 415,997 440,998 466,1012 500,998 590,1003 798,1010 812,1003 880,1003 900,1006 903,1006 920,998 950,998 985,998 1070,1000 1117,1034 1122,997 1200,998 1260,997 350,985 412,985 716,982 688,988 785,978 845,976 1037,983 1062,977 1245,988 1150,988`)];
let g1 = '', g2 = '', r1 = '', r2 = '', last = 0;
neg.forEach(([x, y]) => { const h = Math.max(2, R(y - base)); r2 += box(x, base, 2, h); r1 += box(x, base, 1, Math.max(h, last)) + box(x, base + h - 1, 2, 1); last = h; });
last = 0;
pos.forEach(([x, y]) => { const h = Math.max(2, R(base - y)); g2 += box(x, base - h, 2, h); g1 += box(x, base - Math.max(h, last), 1, Math.max(h, last)) + box(x, base - h, 2, 1); last = h; });
tail.forEach(([x, y]) => { const h = Math.max(1, Math.abs(R(y - base))); if (y > base) r1 += box(x, base, 2, h); else g1 += box(x, base - h, 2, h); });
for (let x = 1242; x < 1790; x += 2) {
  const t = x < 1500 || x > 1590 ? 1 : .3;
  if (rnd() < .55 * t) r1 += box(x, base, 2, 1 + rnd() * 2.500);
  if (rnd() < .2 * t) g1 += box(x, base - 1 - rnd(), 2, 2);
}
document.getElementById('diff').innerHTML = fill('#700000', r2) + fill('#007000', g2) +
  fill('#ff0000', r1 + box(6, base, 500, 1) + box(1240, base, 600, 1)) + fill('#00f000', g1 + box(506, base, 734, 1));

// ---- Axes ----
const marks = '121:4000.00 152:3200.00 161:3000.00 171:2800.00 181:2600.00 192:2400.00 204:2200.00 218:2000.00 232:1800.00 249:1600.00 268:1400.00 289:1200.00 315:1000.00 346:800.00 386:600.00 443:400.00 540:200.00 730:100.00 758:80.00 787:60.00 816:40.00 845:20.00 896:20000000 933:10000000 971:0 1009:-10000000 135:3651.38';
document.getElementById('scale').innerHTML = marks.split(' ').map(m => {
  const [y, t] = m.split(':');
  return `<div class="absolute left-0 flex h-[13px] items-center gap-px whitespace-nowrap" style="top:${y - 111}px"><i class="h-px w-[3px] bg-white"></i><span class="${t === '3651.38' ? 'bg-white text-[#444]' : 'bg-black'}">${t}</span></div>`;
}).join('');
const days = '6:1-9 42:1-12 78:1-15 114:1-18 150:1-21 186:1-24 222:1-27 258:1-30 294:2-2 318:2-4 342:2-6 366:2-8 396:2-13 432:2-16 464:2-19 500:2-22 536:2-25 572:2-28 608:3-3 632:3-5 656:3-7 680:3-9 716:3-12 752:3-15 788:3-18 824:3-21 860:3-24 896:3-27 932:3-30 968:4-2 992:4-4 1016:4-6 1040:4-8 1076:4-11 1112:4-14 1148:4-17 1184:4-20 1220:4-23 1256:4-26 1292:4-29 1328:5-2 1352:5-4 1376:5-6 1400:5-8 1436:5-11 1472:5-14 1508:5-17 1544:5-20 1580:5-23 1616:5-26 1652:5-29 1688:6-1 1712:6-3 1736:6-5 1760:6-7 1784:6-9 1815:6-13 1851:6-16';
document.getElementById('dates').innerHTML = days.split(' ').map(d => {
  const [x, t] = d.split(':');
  return `<div class="absolute top-0 flex -translate-x-1/2 flex-col items-center" style="left:${(x - 2) / 19.170}%"><i class="h-[3px] w-px bg-white"></i><span class="bg-white text-[#333]">${t}</span></div>`;
}).join('');
</script>
</body>
</html>
